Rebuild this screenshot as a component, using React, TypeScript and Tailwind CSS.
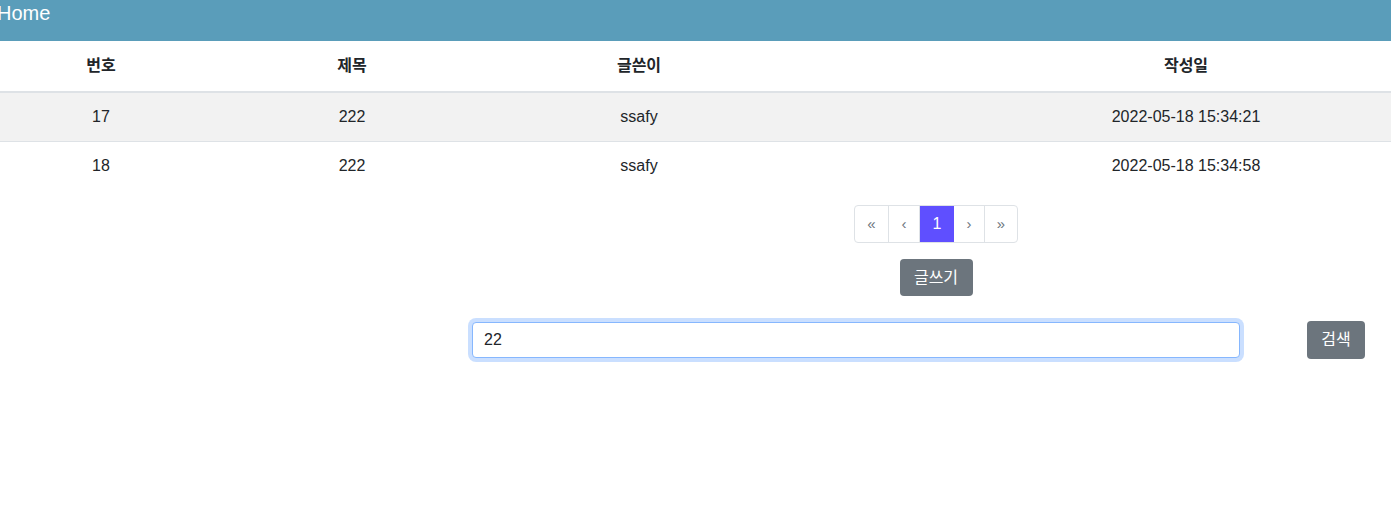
import { useState } from 'react';

const rows = [
  { no: 17, title: '222', writer: 'ssafy', date: '2022-05-18 15:34:21' },
  { no: 18, title: '222', writer: 'ssafy', date: '2022-05-18 15:34:58' },
];

const font = "font-['Liberation_Sans','Noto_Sans_CJK_KR',sans-serif]";

export default function App() {
  const [keyword, setKeyword] = useState('22');

  return (
    <div className={`w-[1391px] h-[510px] overflow-hidden bg-white text-[#212529] ${font}`}>
      {/* Nav bar */}
      <div className="h-[41px] bg-[#5a9dba]">
        <span className="block -ml-[3px] text-[20px] leading-[26px] text-white">Home</span>
      </div>

      {/* Board table */}
      <div className="w-[1872px]">
        <table className="border-collapse text-[16px]">
          <colgroup>
            <col className="w-[202px]" />
            <col className="w-[300px]" />
            <col className="w-[274px]" />
            <col className="w-[820px]" />
          </colgroup>
          <thead>
            <tr className="h-[51px] border-b-2 border-[#dee2e6]">
              <th className="text-center font-bold pb-[1px]">번호</th>
              <th className="text-center font-bold pb-[1px]">제목</th>
              <th className="text-center font-bold pb-[1px]">글쓴이</th>
              <th className="text-center font-bold pb-[1px]">작성일</th>
            </tr>
          </thead>
          <tbody>
            {rows.map((r, i) => (
              <tr
                key={r.no}
                className={i % 2 === 0 ? 'h-[49px] bg-[#f2f2f2] border-b border-[#dee2e6]' : 'h-[49px]'}
              >
                <td className="text-center">{r.no}</td>
                <td className="text-center">{r.title}</td>
                <td className="text-center">{r.writer}</td>
                <td className="text-center">{r.date}</td>
              </tr>
            ))}
          </tbody>
        </table>

        {/* Pagination */}
        <div className="flex justify-center mt-[15px]">
          <ul className="flex h-[38px] border border-[#dee2e6] rounded-[4px] overflow-hidden text-[#6c757d]">
            <li className="w-[34px] flex items-center justify-center border-r border-[#dee2e6] text-[15px]">«</li>
            <li className="w-[31px] flex items-center justify-center border-r border-[#dee2e6] text-[15px]">‹</li>
            <li className="w-[34px] flex items-center justify-center bg-[#5f4fff] text-white text-[16px]">1</li>
            <li className="w-[31px] flex items-center justify-center border-r border-[#dee2e6] text-[15px]">›</li>
            <li className="w-[32px] flex items-center justify-center text-[15px]">»</li>
          </ul>
        </div>

        <div className="flex justify-center mt-[16px]">
          <button className="w-[73px] h-[37px] rounded-[4px] bg-[#6c757d] text-white text-[16px]">글쓰기</button>
        </div>
      </div>

      {/* Search */}
      <div className="flex items-center mt-[25px] pl-[472px] gap-[67px]">
        <input
          value={keyword}
          onChange={(e) => setKeyword(e.target.value)}
          className="w-[768px] h-[36px] px-[11px] text-[16px] text-[#212529] bg-white border border-[#86b7fe] rounded-[4px] outline-none shadow-[0_0_0_4px_rgba(13,110,253,0.22)]"
        />
        <button className="w-[58px] h-[38px] rounded-[4px] bg-[#6c757d] text-white text-[16px]">검색</button>
      </div>
    </div>
  );
}
